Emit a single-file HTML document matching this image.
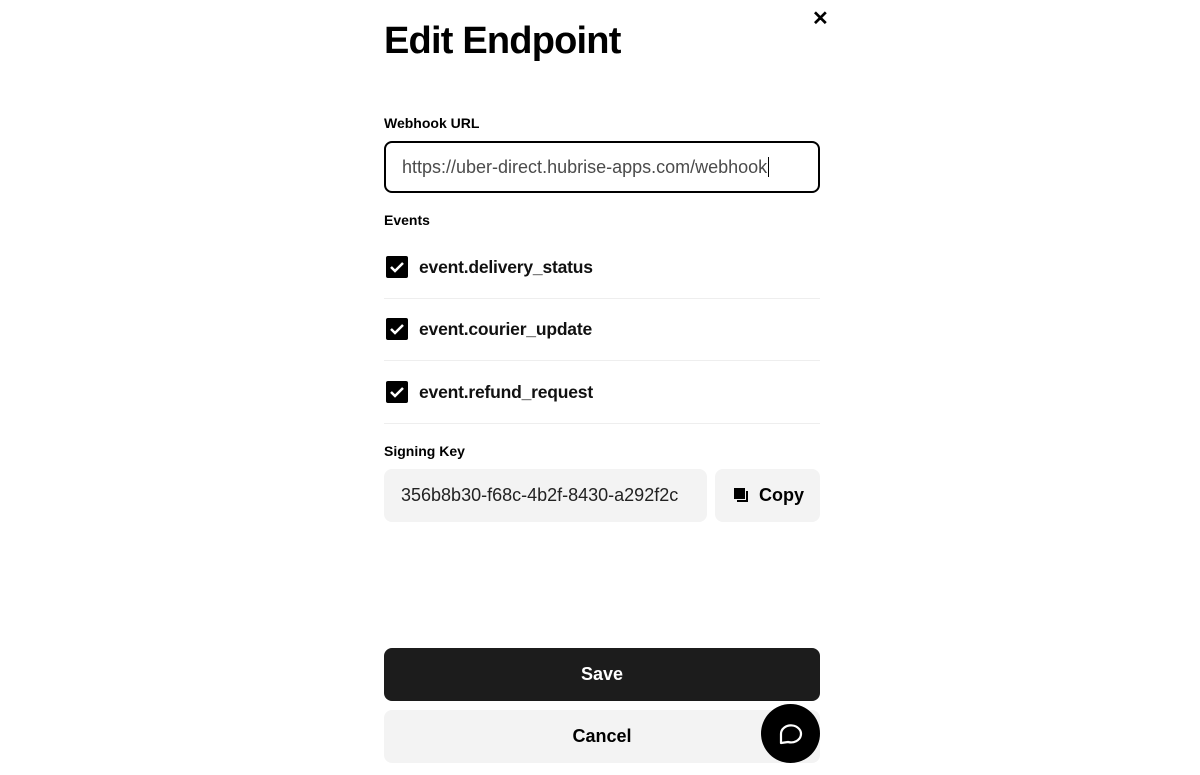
<!DOCTYPE html>
<html><head><style>
*{box-sizing:border-box;margin:0;padding:0}
body{width:1200px;height:775px;background:#fff;font-family:"Liberation Sans",sans-serif;color:#000;position:relative;overflow:hidden}
.abs{position:absolute}
h1{position:absolute;left:384px;top:20px;font-size:38px;font-weight:bold;letter-spacing:-0.8px}
.lbl{position:absolute;left:384px;font-size:14px;font-weight:bold}
.input{position:absolute;left:384px;top:141px;width:436px;height:52px;border:2px solid #000;border-radius:8px;font-size:18px;color:#4b4b4b;padding:14px 0 0 16px}
.row{position:absolute;left:384px;width:436px;height:62px;border-bottom:1px solid #eee}
.cb{position:absolute;left:2px;top:19px;width:22px;height:22px;background:#000;border-radius:2px}
.row span{position:absolute;left:35px;top:20px;font-size:17.5px;font-weight:bold;color:#111;letter-spacing:-0.2px}
.key{position:absolute;left:384px;top:469px;width:323px;height:53px;background:#f3f3f3;border-radius:8px;font-size:18px;color:#222;padding:16px 0 0 17px;overflow:hidden;white-space:nowrap}
.key div{width:287px;overflow:hidden}
.copy{position:absolute;left:715px;top:469px;width:105px;height:53px;background:#f3f3f3;border-radius:8px;font-size:18px;font-weight:bold;padding:16px 0 0 44px}
.btn{position:absolute;left:384px;width:436px;height:53px;border-radius:8px;font-size:18px;font-weight:bold;text-align:center;line-height:53px}
</style></head><body>
<div class="abs" style="left:812px;top:6px;font-size:20px;font-weight:bold">✕</div>
<h1>Edit Endpoint</h1>
<div class="lbl" style="top:115px">Webhook URL</div>
<div class="input">https://uber-direct.hubrise-apps.com/webhook<span style="border-left:1px solid #000;margin-left:1px"></span></div>
<div class="lbl" style="top:212px">Events</div>
<div class="row" style="top:237px"><div class="cb"><svg width="22" height="22"><path d="M5 11l4 4 8-8" stroke="#fff" stroke-width="2.5" fill="none"/></svg></div><span>event.delivery_status</span></div>
<div class="row" style="top:299px"><div class="cb"><svg width="22" height="22"><path d="M5 11l4 4 8-8" stroke="#fff" stroke-width="2.5" fill="none"/></svg></div><span>event.courier_update</span></div>
<div class="row" style="top:362px"><div class="cb"><svg width="22" height="22"><path d="M5 11l4 4 8-8" stroke="#fff" stroke-width="2.5" fill="none"/></svg></div><span>event.refund_request</span></div>
<div class="lbl" style="top:443px">Signing Key</div>
<div class="key"><div>356b8b30-f68c-4b2f-8430-a292f2c</div></div>
<div class="copy"><svg class="abs" style="left:19px;top:19px" width="16" height="16"><rect x="0" y="0" width="11" height="11" fill="#000"/><path d="M13 3v10H3" stroke="#000" stroke-width="2" fill="none"/></svg>Copy</div>
<div class="btn" style="top:648px;background:#1c1c1c;color:#fff">Save</div>
<div class="btn" style="top:710px;background:#f3f3f3;color:#000">Cancel</div>
<div class="abs" style="left:761px;top:704px;width:59px;height:59px;border-radius:50%;background:#000"><svg width="59" height="59"><path d="M20 39V30a10 8.5 0 1 1 7 8z" stroke="#fff" stroke-width="2.2" fill="none" stroke-linejoin="round"/></svg></div>
</body></html>
